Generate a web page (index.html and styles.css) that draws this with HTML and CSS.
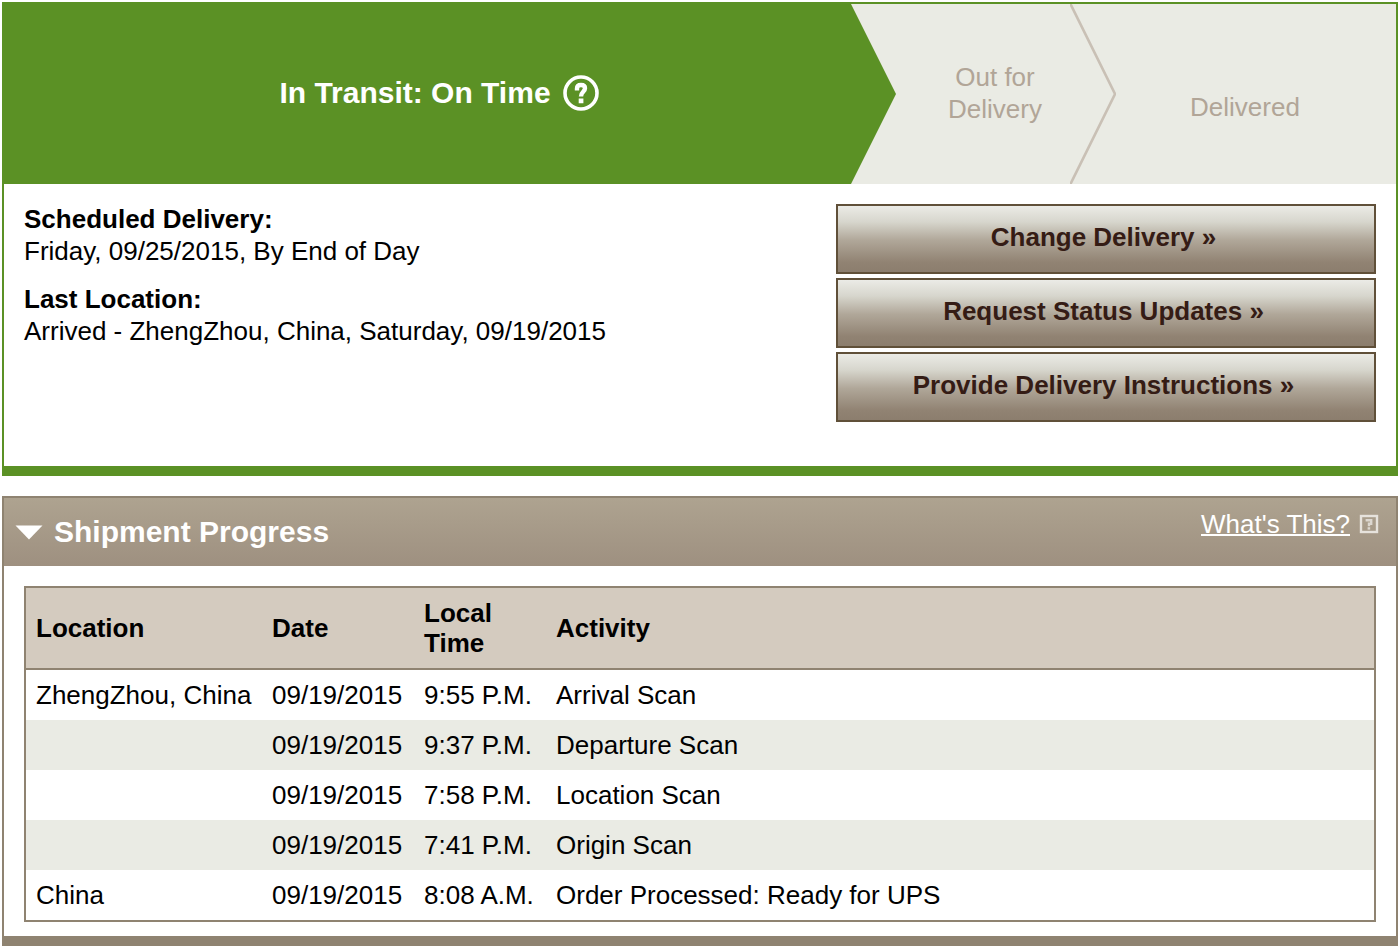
FILE: index.html
```html
<!DOCTYPE html>
<html lang="en">
<head>
<meta charset="utf-8">
<title>Shipment Tracking</title>
<link rel="stylesheet" href="styles.css">
</head>
<body>
<main class="page">
  <section class="status">
    <ol class="steps">
      <li class="step step-current">
        <div class="step-label">
          <h1 class="step-title">In Transit: On Time</h1>
          <button class="help-button" type="button" aria-label="Help">
            <svg class="help-icon" viewBox="0 0 36 36" aria-hidden="true">
              <circle cx="18" cy="18" r="16" fill="none" stroke="#fff" stroke-width="3.6"/>
              <path d="M14 15.5V13.4C14 11 15.4 10 18 10C20.6 10 22 11.2 22 13.3C22 16.8 18 16.8 18 21.4" fill="none" stroke="#fff" stroke-width="4.4"/>
              <path d="M15.7 23.6H20.4V28.2H15.7Z" fill="#fff"/>
            </svg>
          </button>
        </div>
      </li>
      <li class="step step-out">
        <span class="step-label">Out for Delivery</span>
        <svg class="chevron" viewBox="0 0 46 180" aria-hidden="true">
          <path d="M0 -1L45 90L0 181" fill="none" stroke="#c9c0b5" stroke-width="2.6"/>
        </svg>
      </li>
      <li class="step step-last"><span>Delivered</span></li>
    </ol>
    <div class="summary">
      <dl class="facts">
        <div class="fact">
          <dt>Scheduled Delivery:</dt>
          <dd>Friday, 09/25/2015, By End of Day</dd>
        </div>
        <div class="fact">
          <dt>Last Location:</dt>
          <dd>Arrived - ZhengZhou, China, Saturday, 09/19/2015</dd>
        </div>
      </dl>
      <div class="actions">
        <button class="action" type="button">Change Delivery »</button>
        <button class="action" type="button">Request Status Updates »</button>
        <button class="action" type="button">Provide Delivery Instructions »</button>
      </div>
    </div>
  </section>

  <section class="progress">
    <header class="progress-header">
      <button class="toggle" type="button" aria-expanded="true">
        <svg class="toggle-icon" viewBox="0 0 28 16" aria-hidden="true"><path d="M0.5 1.5H27.5L14 15.5Z" fill="#fff"/></svg>
        Shipment Progress
      </button>
      <a class="about" href="#about">
        <span class="about-text">What's This?</span>
        <svg class="about-icon" viewBox="0 0 20 20" aria-hidden="true">
          <rect x="2" y="2" width="16" height="16" fill="none" stroke="#e6e2dc" stroke-width="2.4"/>
          <path d="M6.6 6.2H12.2V9.8H10V12.2" fill="none" stroke="#dcd7d0" stroke-width="2.4"/>
          <path d="M8.6 13.2H11.2V15.6H8.6Z" fill="#dcd7d0"/>
        </svg>
      </a>
    </header>
    <div class="progress-body">
      <table class="scans">
        <colgroup><col class="col-location"><col class="col-date"><col class="col-time"><col></colgroup>
        <thead>
          <tr><th scope="col">Location</th><th scope="col">Date</th><th scope="col">Local Time</th><th scope="col">Activity</th></tr>
        </thead>
        <tbody>
          <tr><td>ZhengZhou, China</td><td>09/19/2015</td><td>9:55 P.M.</td><td>Arrival Scan</td></tr>
          <tr><td></td><td>09/19/2015</td><td>9:37 P.M.</td><td>Departure Scan</td></tr>
          <tr><td></td><td>09/19/2015</td><td>7:58 P.M.</td><td>Location Scan</td></tr>
          <tr><td></td><td>09/19/2015</td><td>7:41 P.M.</td><td>Origin Scan</td></tr>
          <tr><td>China</td><td>09/19/2015</td><td>8:08 A.M.</td><td>Order Processed: Ready for UPS</td></tr>
        </tbody>
      </table>
    </div>
  </section>
</main>
</body>
</html>
```

FILE: styles.css
```css
* {
  box-sizing: border-box;
}

body {
  margin: 0;
  background: #fff;
  color: #000;
  font-family: "Liberation Sans", Arial, sans-serif;
  font-size: 26px;
  line-height: 32px;
}

button {
  font-family: inherit;
  cursor: pointer;
}

.page {
  display: flex;
  flex-direction: column;
  gap: 20px;
  padding: 2px 0 2px 2px;
}

.status {
  border: 2px solid #5b9125;
  border-bottom-width: 10px;
}

.steps {
  display: flex;
  margin: 0;
  padding: 0;
  list-style: none;
  background: #eaebe4;
  color: #b1a597;
}

.step {
  display: flex;
  align-items: center;
  min-height: 180px;
  text-align: center;
}

.step-label {
  flex: 1;
  padding: 0 0 2px 24px;
}

.step-current {
  flex: 1;
  padding-right: 46px;
  background: #5b9125;
  color: #fff;
  clip-path: polygon(0 0, calc(100% - 45px) 0, 100% 50%, calc(100% - 45px) 100%, 0 100%);
}

.step-current .step-label {
  display: flex;
  align-items: center;
  justify-content: center;
  gap: 12px;
}

.step-title {
  margin: 0;
  font-size: 30px;
  line-height: 36px;
}

.help-button {
  padding: 0;
  border: 0;
  background: none;
}

.help-icon {
  display: block;
  width: 36px;
  height: 36px;
}

.step-out {
  width: 220px;
}

.chevron {
  width: 46px;
  height: 180px;
}

.step-last {
  justify-content: center;
  width: 280px;
  padding: 26px 22px 0 0;
}

.summary {
  display: flex;
  justify-content: space-between;
  gap: 20px;
  padding: 20px 20px 44px;
}

.facts {
  display: flex;
  flex-direction: column;
  gap: 16px;
  margin: 0;
}

.facts dt {
  font-weight: bold;
  line-height: 30px;
}

.facts dd {
  margin: 0;
  line-height: 34px;
}

.actions {
  display: flex;
  flex-direction: column;
  gap: 4px;
  width: 540px;
}

.action {
  height: 70px;
  padding: 0 5px 4px 0;
  border: 2px solid #605039;
  background: linear-gradient(#ebebe6 0%, #d7d6cd 24%, #b0a799 52%, #918373 85%, #8c7e6e 100%);
  color: #351c15;
  font-size: 26px;
  font-weight: bold;
}

.progress {
  border: 2px solid #8f8371;
  border-bottom-width: 10px;
}

.progress-header {
  display: flex;
  align-items: center;
  justify-content: space-between;
  height: 68px;
  padding: 0 17px 0 11px;
  background: linear-gradient(#aea390, #9e9080);
  color: #fff;
}

.toggle {
  display: flex;
  align-items: center;
  gap: 11px;
  padding: 0;
  border: 0;
  background: none;
  color: #fff;
  font-size: 30px;
  font-weight: bold;
}

.toggle-icon {
  width: 28px;
  height: 16px;
}

.about {
  display: flex;
  align-items: center;
  gap: 9px;
  padding-bottom: 17px;
  color: #fff;
  text-decoration: none;
}

.about-text {
  text-decoration: underline;
  text-decoration-thickness: 2px;
}

.about-icon {
  width: 20px;
  height: 20px;
}

.progress-body {
  padding: 20px 20px 14px;
}

.scans {
  width: 100%;
  table-layout: fixed;
  border: 2px solid #8f8371;
  border-spacing: 0;
  line-height: 30px;
}

.col-location {
  width: 236px;
}

.col-date {
  width: 152px;
}

.col-time {
  width: 132px;
}

.scans th,
.scans td {
  padding: 10px;
  text-align: left;
  white-space: nowrap;
}

.scans th {
  border-bottom: 2px solid #8f8371;
  background: #d4cbbf;
  white-space: normal;
}

.scans tbody tr:nth-child(even) {
  background: #eaebe4;
}
```
